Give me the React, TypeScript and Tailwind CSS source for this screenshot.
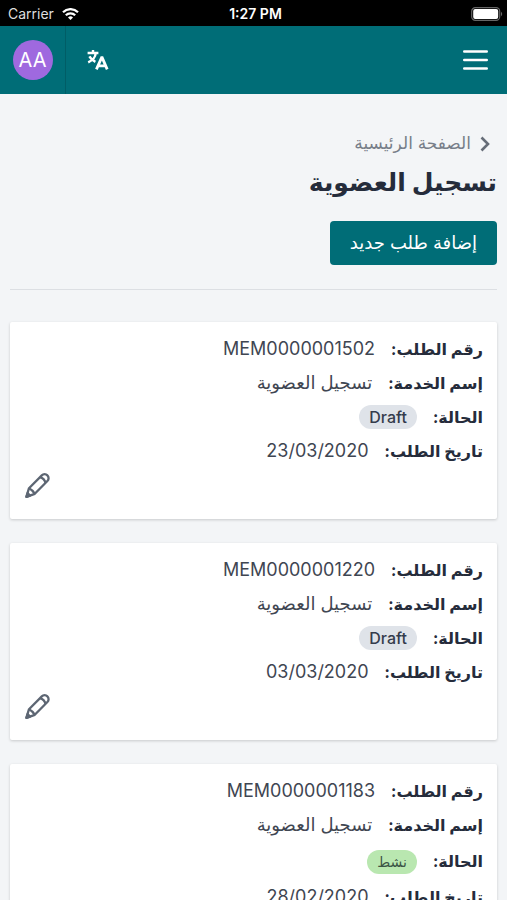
import React from 'react';
import clsx from 'clsx';

type Status = 'draft' | 'active';

interface MembershipRequest {
  id: string;
  service: string;
  status: Status;
  date: string;
}

const requests: MembershipRequest[] = [
  { id: 'MEM0000001502', service: 'تسجيل العضوية', status: 'draft', date: '23/03/2020' },
  { id: 'MEM0000001220', service: 'تسجيل العضوية', status: 'draft', date: '03/03/2020' },
  { id: 'MEM0000001183', service: 'تسجيل العضوية', status: 'active', date: '28/02/2020' },
];

const statusLabels: Record<Status, string> = {
  draft: 'Draft',
  active: 'نشط',
};

function StatusBar() {
  return (
    <div dir="ltr" className="grid h-[26px] shrink-0 grid-cols-3 items-center bg-black pl-2 pr-1 pt-px text-sm text-white">
      <div className="flex items-center gap-2 text-[#dedede]">
        <span>Carrier</span>
        <svg className="h-3 w-[17px]" viewBox="0 0 17 12" fill="none" stroke="#fff" strokeWidth="2.2">
          <path d="M1 4.2a10.6 10.6 0 0 1 15 0" />
          <path d="M3.8 7.3a6.6 6.6 0 0 1 9.4 0" />
          <path d="M8.5 12 6 9.4a3.6 3.6 0 0 1 5 0z" fill="#fff" stroke="none" />
        </svg>
      </div>
      <div className="text-center font-semibold">1:27 PM</div>
      <div className="flex justify-end">
        <svg className="h-[14px] w-8" viewBox="0 0 32 14" fill="none">
          <rect x="0.7" y="0.7" width="28" height="12.6" rx="3.6" stroke="#666" strokeWidth="1.2" />
          <rect x="2.2" y="2.1" width="25" height="9.8" rx="2" fill="#fff" />
          <path d="M30 4.8c1.6.8 1.6 3.6 0 4.4z" fill="#666" />
        </svg>
      </div>
    </div>
  );
}

function Header() {
  return (
    <header dir="ltr" className="flex h-[68px] shrink-0 items-stretch justify-between bg-[#006d77] text-white">
      <div className="flex items-stretch">
        <button type="button" className="flex w-[65px] items-center justify-center">
          <span className="flex h-10 w-10 items-center justify-center rounded-full bg-[#9f69df] text-xl">AA</span>
        </button>
        <button type="button" aria-label="تغيير اللغة" className="flex w-16 items-center justify-center border-l border-[#005d66]">
          <svg className="h-6 w-6" viewBox="0 0 24 24" fill="none" stroke="currentColor" strokeWidth="2.4">
            <path d="M1.6 5h10.8M7 2v3M9.8 5c-.4 4.2-3.2 7.4-7.6 9.4M3.4 8.4c1.2 2.4 3 4 6 5.4" />
            <path d="M10.4 21.4 15.6 9.6h.6l5 11.8M12.6 17.8h6.4" strokeWidth="2.8" />
          </svg>
        </button>
      </div>
      <button type="button" aria-label="القائمة" className="flex items-center px-[19px]">
        <svg className="h-[22px] w-[25px]" viewBox="0 0 25 22" stroke="currentColor" strokeWidth="2.4" strokeLinecap="round">
          <path d="M1.2 2.5h22.6M1.2 11h22.6M1.2 19.5h22.6" />
        </svg>
      </button>
    </header>
  );
}

function StatusBadge({ status }: { status: Status }) {
  return (
    <span
      className={clsx(
        'flex h-6 items-center rounded-full',
        status === 'draft'
          ? 'bg-[#dfe3e9] px-[10px] text-base font-medium text-[#343c4c]'
          : 'mb-[6px] mt-2 bg-[#b9e7b0] px-[10px] text-sm text-[#3d5546]'
      )}
    >
      {statusLabels[status]}
    </span>
  );
}

function Row({ label, children }: { label: string; children: React.ReactNode }) {
  return (
    <div className="flex min-h-[34px] items-center gap-4">
      <dt className="text-base font-bold text-[#252c3b]">{label}:</dt>
      <dd className="text-[#3f4652]">{children}</dd>
    </div>
  );
}

function RequestCard({ request }: { request: MembershipRequest }) {
  return (
    <article className="rounded-xs bg-white px-[14px] pb-5 pt-[10px] shadow-[0_1px_3px_rgba(0,0,0,0.18)]">
      <dl className="text-lg">
        <Row label="رقم الطلب">{request.id}</Row>
        <Row label="إسم الخدمة">{request.service}</Row>
        <Row label="الحالة">
          <StatusBadge status={request.status} />
        </Row>
        <Row label="تاريخ الطلب">{request.date}</Row>
      </dl>
      <div className="flex justify-end pt-1">
        <button type="button" aria-label="تعديل" className="text-[#5d6673]">
          <svg className="h-[27px] w-[27px]" viewBox="0 0 27 27" fill="none" stroke="currentColor" strokeWidth="2.3" strokeLinejoin="round">
            <path d="M2.4 24.8 5 16.2 17.8 3.4a3.9 3.9 0 0 1 5.6 0 3.9 3.9 0 0 1 0 5.6L10.8 21.8z" />
            <path d="M5 16.2c2.4 1.2 4.6 3.2 5.8 5.6M16 5.2c2.6.8 4.8 3 5.6 5.6" />
            <path d="m2.4 24.8 1.2-3.8 2.4 2.6z" fill="currentColor" />
          </svg>
        </button>
      </div>
    </article>
  );
}

export default function App() {
  return (
    <div dir="rtl" className="flex h-screen flex-col bg-[#f3f5f7] font-['Inter','DejaVu_Sans',sans-serif]">
      <StatusBar />
      <Header />
      <main className="flex-1 overflow-y-auto px-[10px] pb-6 pt-9 [scrollbar-width:none]">
        <nav>
          <a href="#" className="flex h-7 items-center gap-2 pr-[6px] text-[17px] text-[#777e89]">
            <svg className="h-4 w-3" viewBox="0 0 12 16" fill="none" stroke="#666d78" strokeWidth="2.6">
              <path d="M2.5 1.5 9 8l-6.5 6.5" />
            </svg>
            الصفحة الرئيسية
          </a>
        </nav>
        <h1 className="text-[25px] leading-[48px] font-bold text-[#252c3b]">تسجيل العضوية</h1>
        <div className="border-b border-[#dcdfe3] pb-6 pt-[15px]">
          <button type="button" className="h-11 rounded-[4px] bg-[#006d77] px-5 text-lg text-white">
            إضافة طلب جديد
          </button>
        </div>

        {/* Liste des demandes */}
        <div className="flex flex-col gap-6 pt-8">
          {requests.map((request) => (
            <RequestCard key={request.id} request={request} />
          ))}
        </div>
      </main>
    </div>
  );
}
